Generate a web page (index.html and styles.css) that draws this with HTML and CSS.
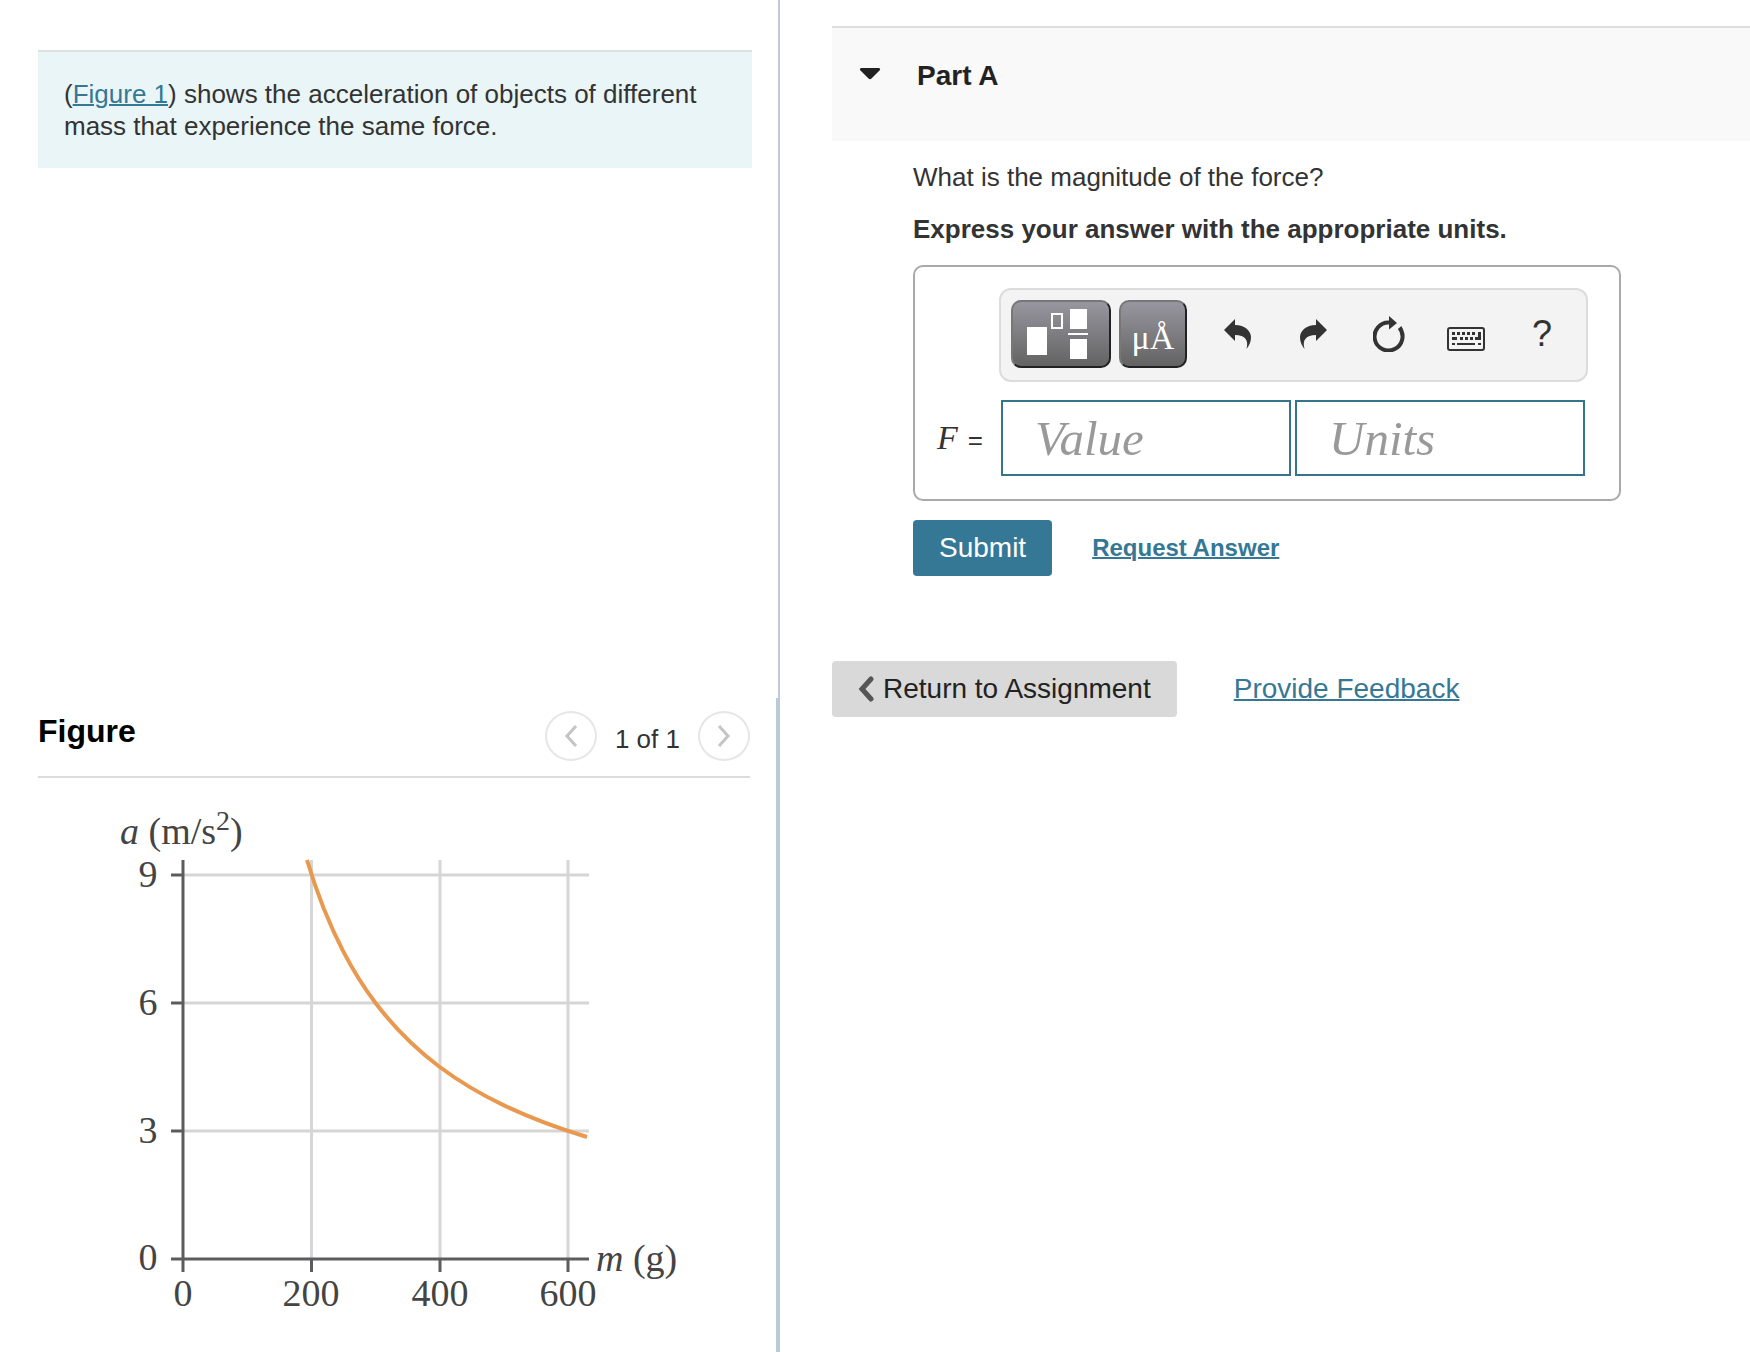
FILE: index.html
```html
<!DOCTYPE html>
<html lang="en">
<head>
  <meta charset="UTF-8" />
  <meta name="viewport" content="width=device-width, initial-scale=1.0"/>
  <title>Part A</title>
  <link rel="stylesheet" href="styles.css">
</head>
<body>
  <div class="page">
    <aside class="left">
      <section class="intro-pane">
        <p class="intro">(<a href="#figure">Figure 1</a>) shows the acceleration of objects of different mass that experience the same force.</p>
      </section>

      <section class="figure-pane" id="figure">
        <header class="figure-header">
          <h2>Figure</h2>
          <div class="pager">
            <button type="button" class="pager-btn" aria-label="Previous figure">
              <svg width="14" height="24" viewBox="0 0 14 24"><path d="M12 2 3 12l9 10"/></svg>
            </button>
            <span class="pager-count">1 of 1</span>
            <button type="button" class="pager-btn" aria-label="Next figure">
              <svg width="14" height="24" viewBox="0 0 14 24"><path d="M2 2l9 10-9 10"/></svg>
            </button>
          </div>
        </header>
        <svg class="chart" viewBox="0 0 712 574" role="img" aria-label="Acceleration against mass">
          <g class="grid">
            <path d="M146 97H551M146 225H551M146 353H551"/>
            <path d="M273.5 82V481M402 82V481M530 82V481"/>
          </g>
          <path class="curve" d="M269 82C281 122.200 293.300 150.400 305.500 173.800C316.200 194.300 326.900 210.800 337.600 225C359 253.400 380.400 273 401.800 289C423.200 305 444.600 317.200 466 327.400C493.600 340.600 521.200 350.600 549 359"/>
          <path class="axis" d="M145 82V494M133 481H551M133 97H145M133 225H145M133 353H145M273.500 481V494M402 481V494M530 481V494"/>
          <g class="labels">
            <text x="82" y="66"><tspan class="var">a</tspan> (m/s<tspan class="sup" dy="-14">2</tspan><tspan dy="14">)</tspan></text>
            <text x="558" y="493"><tspan class="var">m</tspan> (g)</text>
            <g text-anchor="middle">
              <text x="110" y="109">9</text>
              <text x="110" y="237">6</text>
              <text x="110" y="365">3</text>
              <text x="110" y="492">0</text>
              <text x="145" y="528">0</text>
              <text x="273" y="528">200</text>
              <text x="402" y="528">400</text>
              <text x="530" y="528">600</text>
            </g>
          </g>
        </svg>
      </section>
    </aside>

    <main class="right">
      <header class="part-header">
        <button type="button" class="caret" aria-label="Collapse part">
          <svg width="22" height="12" viewBox="0 0 22 12"><path d="M2 0H20Q22 1 20.500 2.500L12.500 10.500Q11 12 9.500 10.500L1.500 2.500Q0 1 2 0Z"/></svg>
        </button>
        <h1>Part A</h1>
      </header>

      <form class="part-body">
        <p>What is the magnitude of the force?</p>
        <p><strong>Express your answer with the appropriate units.</strong></p>

        <div class="answer-box">
          <div class="toolbar">
            <button type="button" class="tool templates" aria-label="Templates">
              <svg width="68" height="52" viewBox="0 0 68 52">
                <path d="M0 19h20v28H0zM43 1h17v20H43zM41 25h20v2H41zM43 31h17v20H43z"/>
                <path class="outline" d="M25 6h10v14H25z"/>
              </svg>
            </button>
            <button type="button" class="tool symbols" aria-label="Symbols">μÅ</button>
            <div class="icons">
              <button type="button" class="icon" aria-label="Undo">
                <svg width="27" height="30" viewBox="0 0 27 30"><path d="M0 11 11 0V6C21 6 27 12 27 18.500C27 23 25 27 22.500 30C25 21 21 16 11 16V22Z"/></svg>
              </button>
              <button type="button" class="icon" aria-label="Redo">
                <svg width="27" height="30" viewBox="0 0 27 30"><path d="M27 11 16 0V6C6 6 0 12 0 18.500C0 23 2 27 4.500 30C2 21 6 16 16 16V22Z"/></svg>
              </button>
              <button type="button" class="icon" aria-label="Reset">
                <svg width="32" height="36" viewBox="0 0 32 36"><path class="ring" d="M26.500 11.800A14 14 0 1 1 16 6.500"/><path d="M16 0 24 7 16 13.500ZM25.500 13 28.500 10 30 14Z"/></svg>
              </button>
              <button type="button" class="icon keyboard" aria-label="Keyboard shortcuts">
                <svg width="38" height="24" viewBox="0 0 38 24">
                  <rect class="frame" x="1" y="1" width="36" height="22" rx="2"/>
                  <path d="M5 5h3v3H5zM10 5h3v3h-3zM15 5h3v3h-3zM20 5h3v3h-3zM25 5h3v3h-3zM31 5h3v8h-6v-3h3zM5 10h5v3H5zM13 10h3v3h-3zM18 10h3v3h-3zM23 10h3v3h-3zM5 16h3v2H5zM10 16h18v2H10zM31 16h3v2h-3z"/>
                </svg>
              </button>
              <button type="button" class="icon help" aria-label="Help">?</button>
            </div>
          </div>
          <label class="lhs" for="value"><i>F</i> <span>=</span></label>
          <div class="fields">
            <input type="text" id="value" placeholder="Value" />
            <input type="text" id="units" placeholder="Units" aria-label="Units" />
          </div>
        </div>

        <div class="actions">
          <button type="submit" class="submit">Submit</button>
          <a class="request" href="#">Request Answer</a>
        </div>
      </form>

      <footer class="bottom">
        <button type="button" class="return">
          <svg width="17" height="26" viewBox="0 0 17 26"><path d="M13 3 4 13l9 10"/></svg>
          Return to Assignment
        </button>
        <a href="#">Provide Feedback</a>
      </footer>
    </main>
  </div>
</body>
</html>
```
FILE: styles.css
```css
* {
  box-sizing: border-box;
}
body {
  margin: 0;
  font-family: "Liberation Sans", Helvetica, Arial, sans-serif;
  font-size: 26px;
  line-height: 32px;
  color: #333;
  background: #fff;
}
h1, h2, p {
  margin: 0;
}
button, input {
  font: inherit;
  color: inherit;
}
button {
  padding: 0;
  border: none;
  background: none;
  cursor: pointer;
}
svg {
  display: block;
}
a {
  color: #357896;
  text-decoration-thickness: 2px;
}
.page {
  display: grid;
  grid-template-columns: minmax(0, 78fr) minmax(0, 97fr);
  min-height: 100vh;
}

/* left column */
.left {
  display: grid;
  grid-template-rows: 1fr auto;
}
.intro-pane {
  padding: 50px 26px 26px 38px;
  border-right: 2px solid #bfc8dc;
}
.intro {
  padding: 26px;
  border-top: 2px solid #dcdfdf;
  background: #e9f5f7;
}
.figure-pane {
  padding: 0 26px 0 38px;
  border-right: 4px solid #bbcad9;
}
.figure-header {
  display: flex;
  justify-content: space-between;
  align-items: flex-start;
  padding: 13px 0 15px;
  border-bottom: 2px solid #dcdcdc;
}
.figure-header h2 {
  font-size: 32px;
  line-height: 40px;
  color: #000;
}
.pager {
  display: flex;
  align-items: center;
  gap: 18px;
}
.pager-count {
  padding-top: 6px;
}
.pager-btn {
  display: grid;
  place-items: center;
  width: 52px;
  height: 50px;
  border: 2px solid #e6e6e6;
  border-radius: 50%;
}
.pager-btn path {
  fill: none;
  stroke: #c4c4c4;
  stroke-width: 3;
}
.chart {
  width: 100%;
  height: auto;
  fill: none;
}
.grid {
  stroke: #d6d6d6;
  stroke-width: 3;
}
.axis {
  stroke: #5c5c5e;
  stroke-width: 3;
}
.curve {
  stroke: #e8994f;
  stroke-width: 4;
}
.labels {
  fill: #444;
  font-family: "Liberation Serif", "Times New Roman", serif;
  font-size: 38px;
}
.var {
  font-style: italic;
}
.sup {
  font-size: 28px;
}

/* right column */
.right {
  padding: 26px 0 26px 52px;
}
.part-header {
  display: flex;
  align-items: flex-start;
  gap: 36px;
  min-height: 115px;
  padding: 32px 27px;
  border-top: 2px solid #dedede;
  background: #f9f9f9;
  color: #222;
}
.part-header h1 {
  font-size: 28px;
  line-height: 32px;
}
.caret {
  display: grid;
  place-items: center;
  height: 28px;
  fill: #222;
}
.part-body {
  padding: 20px 27px 0 81px;
}
.part-body p {
  margin-bottom: 20px;
}
.answer-box {
  display: grid;
  grid-template-columns: 84px minmax(0, 1fr);
  row-gap: 18px;
  max-width: 708px;
  padding: 21px 31px 23px 0;
  border: 2px solid #a9a9a9;
  border-radius: 10px;
}
.toolbar {
  grid-column: 2;
  display: flex;
  gap: 8px;
  padding: 10px 6px 12px 10px;
  border: 2px solid #dcdcdc;
  border-radius: 12px;
  background: #f3f3f3;
}
.tool {
  display: grid;
  place-items: center;
  width: 68px;
  height: 68px;
  border: 2px solid;
  border-color: #777 #222 #222 #777;
  border-radius: 10px;
  background: linear-gradient(#98969f, #636363);
  color: #fff;
  fill: #fff;
}
.templates {
  width: 100px;
}
.outline {
  fill: none;
  stroke: #fff;
  stroke-width: 2;
}
.symbols {
  padding-top: 8px;
  font-family: "Liberation Serif", "Times New Roman", serif;
  font-size: 34px;
}
.icons {
  flex: 1;
  display: grid;
  grid-template-columns: repeat(5, 1fr);
  margin-left: 4px;
}
.icon {
  display: grid;
  place-items: center;
  fill: #333;
}
.ring, .frame {
  fill: none;
  stroke: #333;
}
.ring {
  stroke-width: 4;
}
.frame {
  stroke-width: 2;
}
.keyboard {
  padding-top: 10px;
}
.help {
  font-size: 36px;
}
.lhs {
  display: flex;
  align-items: center;
  gap: 10px;
  padding-left: 22px;
}
.lhs i {
  font-family: "Liberation Serif", "Times New Roman", serif;
  font-size: 34px;
}
.lhs span {
  padding-top: 4px;
}
.fields {
  display: flex;
  gap: 4px;
  padding: 0 3px 0 2px;
}
.fields input {
  flex: 1;
  min-width: 0;
  height: 76px;
  padding: 0 32px;
  border: 2px solid #357589;
  background: #fff;
  font-family: "Liberation Serif", "Times New Roman", serif;
  font-size: 49px;
  font-style: italic;
}
.fields input::placeholder {
  color: #999;
  opacity: 1;
}
.actions {
  display: flex;
  align-items: center;
  gap: 40px;
  margin-top: 19px;
}
.submit {
  padding: 12px 26px;
  border-radius: 4px;
  background: #357896;
  color: #fff;
  font-size: 28px;
}
.request {
  font-size: 24px;
  font-weight: bold;
}
.bottom {
  display: flex;
  align-items: center;
  gap: 57px;
  margin-top: 85px;
  font-size: 28px;
}
.return {
  display: flex;
  align-items: center;
  gap: 8px;
  padding: 12px 26px;
  border-radius: 4px;
  background: #d9d9d9;
  color: #222;
}
.return path {
  fill: none;
  stroke: #555;
  stroke-width: 5;
  stroke-linecap: round;
}
```
